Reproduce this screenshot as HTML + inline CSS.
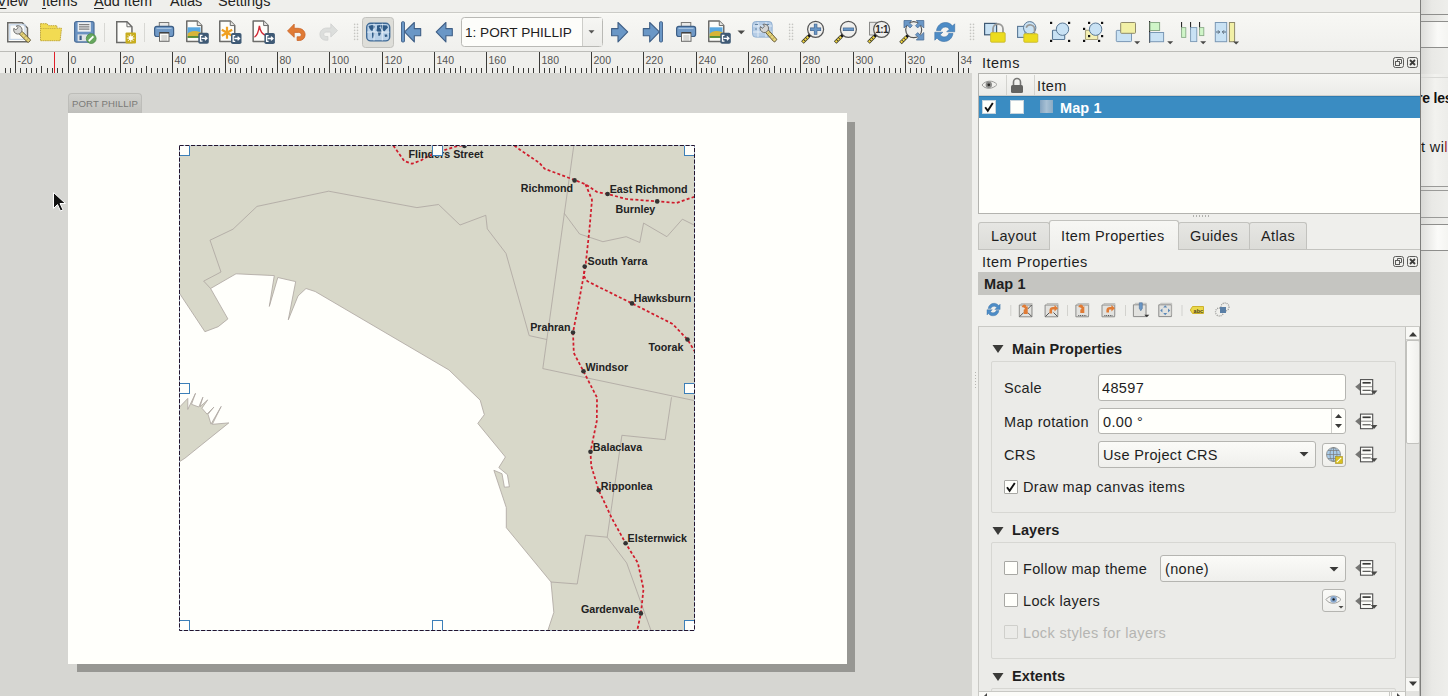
<!DOCTYPE html>
<html><head><meta charset="utf-8">
<style>
*{box-sizing:border-box;margin:0;padding:0}
html,body{width:1448px;height:696px;overflow:hidden;background:#efefec;font-family:"Liberation Sans",sans-serif;font-size:14px;color:#1e1e1e}
.a{position:absolute}
#menubar{left:0;top:0;width:1420px;height:13px;background:#efefec;border-bottom:1px solid #cbcbc7;overflow:hidden}
#menubar span{position:absolute;top:-7px;font-size:14.5px;line-height:16px;color:#232321}
#menubar u{text-decoration:underline;text-decoration-thickness:1px;text-underline-offset:2px}
#toolbar{left:0;top:13px;width:1420px;height:39px;background:linear-gradient(#fbfbf7 0px,#f7f7f4 2px,#f0f0ed 100%);border-bottom:1px solid #bcbcb8}
#ruler{left:0;top:52px;width:972px;height:21px;background:#efefec;overflow:hidden}
.rl text{font-size:10.5px;fill:#555553;font-family:"Liberation Sans",sans-serif}
#canvas{left:0;top:73px;width:972px;height:623px;background:#d6d6d2;overflow:hidden}
#dock{left:972px;top:52px;width:448px;height:644px;background:#efefec}
#farright{overflow:hidden;left:1420px;top:0;width:28px;height:696px;background:linear-gradient(90deg,#d8d8d5,#e9e9e6 40%,#eeeeeb);border-left:1px solid #7e7e7c}
.sep{position:absolute;width:1px;background:#d0d0cc}
.grip{position:absolute;width:5px;height:16px;background-image:radial-gradient(circle,#b9b9b5 0.7px,transparent 0.8px);background-size:2.5px 3px}
.title{position:absolute;font-size:14.5px;color:#1e1e1e;letter-spacing:0.5px}
.dockbtn{position:absolute;width:11px;height:11px;border:1px solid #6a6a68;border-radius:2px}
.lbl{position:absolute;font-size:14.5px;color:#1e1e1e;white-space:nowrap;letter-spacing:0.35px}
.bold{font-weight:bold;letter-spacing:0.1px}
.edit{position:absolute;background:#fffffb;border:1px solid #b5b5b1;border-radius:3px}
.combo{position:absolute;background:linear-gradient(#fbfbf8,#efefec);border:1px solid #b5b5b1;border-radius:3px}
.chk{position:absolute;width:14px;height:14px;background:#fffffb;border:1px solid #a8a8a4;border-radius:1px}
.tab{position:absolute;height:27px;border:1px solid #c2c2be;border-bottom:none;border-radius:3px 3px 0 0;background:linear-gradient(#e6e6e3,#dcdcd8)}
.grp{position:absolute;border:1px solid #d7d7d3;border-radius:2px;background:#ebebe8}
</style></head>
<body>
<div id="menubar" class="a">
  <span style="left:-3px"><u>V</u>iew</span>
  <span style="left:42px"><u>I</u>tems</span>
  <span style="left:94px"><u>A</u>dd Item</span>
  <span style="left:170px">Atlas</span>
  <span style="left:218px">Settings</span>
</div>
<div id="toolbar" class="a"></div>
<svg class="a" style="left:0;top:13px" width="1420" height="38" viewBox="0 13 1420 38">
<defs>
 <g id="badge"><rect x="0" y="0" width="10.5" height="11" rx="1.8" fill="#3f5a75"/>
  <path d="M4.2 2.6H2.2v5.8h2M3.3 5.5h5.2M6.6 3.6l2 1.9-2 1.9" fill="none" stroke="#fff" stroke-width="1.3"/></g>
 <g id="page"><path d="M0.75 0.75h10.5l4.5 4.5v16h-15z" fill="#fdfdfa" stroke="#6c6c6a" stroke-width="1.5" stroke-linejoin="round"/><path d="M11.25 0.75v4.5h4.5" fill="#e6e6e3" stroke="#6c6c6a" stroke-width="1"/></g>
 <g id="arrowL"><path d="M0.8 10.3L10.5 0.9v6.1h6.4v7.2h-6.4v6.1z" fill="#6a97c6" stroke="#3f5f86" stroke-width="1.1" stroke-linejoin="round"/></g>
 <g id="lens"><circle cx="0" cy="0" r="8" fill="#efefed" stroke="#555" stroke-width="1.2"/><path d="M-5.8 5.8l-1.6 1.6" stroke="#111" stroke-width="3"/><path d="M-7.2 7.2l-6 6" stroke="#3a3a2a" stroke-width="3.6"/><path d="M-7.4 7.4l-5.6 5.6" stroke="#f2d640" stroke-width="2.2" stroke-dasharray="2 0.8"/></g>
 <g id="dd"><path d="M0 0h6l-3 3z" fill="#4a4a48"/></g>
 <g id="printer"><rect x="5.3" y="0.5" width="9.5" height="6" fill="#e9e9e7" stroke="#7a7a78" stroke-width="1"/><rect x="0.6" y="4.3" width="19" height="10.2" rx="2.2" fill="#7099c6" stroke="#3e5f86" stroke-width="1.2"/><path d="M2.5 6.5h15" stroke="#a8c4e0" stroke-width="1"/><rect x="5.5" y="10.8" width="9.5" height="8.5" fill="#fbfbf8" stroke="#6a6a68" stroke-width="1"/><path d="M5.5 10.8h9.5" stroke="#333" stroke-width="1.2"/><path d="M7.3 14h6M7.3 16h6M7.3 18h6" stroke="#8a8a88" stroke-width="0.6"/></g>
</defs>
<!-- 1 layout manager -->
<g transform="translate(7,22)"><path d="M0.75 0.75h14.5l5.2 5.2v13.8h-19.7z" fill="#fbfbf8" stroke="#6a6a68" stroke-width="1.5"/><rect x="2.8" y="2.8" width="15.2" height="14.6" fill="none" stroke="#c5d6ea" stroke-width="1.2"/>
 <g transform="translate(10.8,7.8) rotate(-45)"><rect x="-1.9" y="3" width="3.8" height="13.5" rx="1" fill="#e6d47a" stroke="#5e5230" stroke-width="0.9"/><path d="M-1.9 6.5h3.8M-1.9 10h3.8M-1.9 13.5h3.8" stroke="#a89848" stroke-width="0.7"/>
 <path d="M-1.6 -3.8V-1.3H1.6V-3.8A4.2 4.2 0 1 1 -1.6 -3.8z" fill="#d6d6d4" stroke="#6a6a68" stroke-width="0.9"/></g></g>
<!-- 2 open folder -->
<g transform="translate(40,22.5)"><path d="M0.5 1.2h6.5l1.4 2h8.4v2.5h4.7l-1.4 12.5H0.5z" fill="#f2db52" stroke="#c2a93b" stroke-width="1" stroke-dasharray="1.6 0.6"/><path d="M0.8 6h15.6" stroke="#c9b245" stroke-width="0.9" stroke-dasharray="1.6 0.6"/></g>
<!-- 3 save -->
<g transform="translate(74,21)"><rect x="0.6" y="0.6" width="19.4" height="20.6" rx="2" fill="#6b93c2" stroke="#4b6e98" stroke-width="1.2"/><rect x="3.6" y="1.2" width="13.2" height="9.5" fill="#eef0f2"/><path d="M5 3.7h10.4M5 5.9h10.4M5 8.1h10.4" stroke="#555" stroke-width="0.9"/><rect x="3.6" y="13.4" width="10" height="6.8" fill="#dfe3e6"/><rect x="5.5" y="14.6" width="2.2" height="4.4" fill="#3e5f86"/>
 <circle cx="17.2" cy="17.6" r="4.9" fill="#67a85e" stroke="#4f8a47" stroke-width="0.8"/><path d="M14.8 20l4.6-4.6" stroke="#fff" stroke-width="1.8"/></g>
<rect x="104" y="23" width="1" height="19" fill="#d8d8d4"/>
<!-- 5 new layout -->
<g transform="translate(116,21)"><path d="M0.75 0.75h10.2l5 5v15.7h-15.2z" fill="#fdfdfa" stroke="#6c6c6a" stroke-width="1.5"/><path d="M10.95 0.75v5h5" fill="none" stroke="#6c6c6a" stroke-width="1"/>
 <rect x="9.5" y="11.6" width="10.5" height="11" rx="1" fill="#c8ad1e"/><circle cx="14.75" cy="17.1" r="2.2" fill="#fff"/><path d="M14.75 13.2v7.8M10.9 17.1h7.7M12 14.4l5.5 5.5M17.5 14.4L12 19.9" stroke="#fff" stroke-width="0.9"/></g>
<rect x="144" y="23" width="1" height="19" fill="#d8d8d4"/>
<!-- 7 print -->
<use href="#printer" transform="translate(154,22)"/>
<!-- 8 export image -->
<g transform="translate(186,20.3)"><use href="#page"/><rect x="1.6" y="7" width="12.9" height="10.5" fill="#5aa8e0"/><path d="M1.6 13.5c3-3 7-3.5 12.9-1.5v5.5H1.6z" fill="#d8b438"/><rect x="1.6" y="15.8" width="12.9" height="1.7" fill="#4b8a3a"/><use href="#badge" transform="translate(12.3,12.5)"/></g>
<!-- 9 export svg -->
<g transform="translate(219,20.3)"><use href="#page"/><path d="M8 6.5v12M2.8 9.5l10.4 6M2.8 15.5l10.4-6" stroke="#f0a020" stroke-width="2.2"/><use href="#badge" transform="translate(12,12.7)"/></g>
<!-- 10 export pdf -->
<g transform="translate(252.4,20.3)"><use href="#page"/><path d="M2 16.8c2.2-1 4-4.5 5-11.2 0.6 4.8 3 8.4 6.5 9.4" fill="none" stroke="#d22a36" stroke-width="1.4"/><use href="#badge" transform="translate(12,12.7)"/></g>
<!-- 11 undo -->
<g transform="translate(287,23.6)"><path d="M0.5 7.4L7.2 0.5v4.2h3.6c4.5 0 7.3 2.9 7.3 6.4 0 3.4-2.6 5.8-5.7 5.8h-2.3v-3.7h2c1.3 0 2.2-0.9 2.2-2.1s-1-2.3-2.7-2.3H7.2v4.9z" fill="#e07b35" stroke="#c9652a" stroke-width="0.8"/></g>
<!-- 12 redo -->
<g transform="translate(338,23.3) scale(-1,1)"><path d="M0.5 7.4L7.2 0.5v4.2h3.6c4.5 0 7.3 2.9 7.3 6.4 0 3.4-2.6 5.8-5.7 5.8h-2.3v-3.7h2c1.3 0 2.2-0.9 2.2-2.1s-1-2.3-2.7-2.3H7.2v4.9z" fill="#dcdedc" stroke="#cfd1cf" stroke-width="0.8"/></g>
<!-- grip 1 -->
<g fill="#c6c6c2"><circle cx="354.6" cy="24.4" r="0.8"/><circle cx="357.5" cy="24.4" r="0.8"/><circle cx="354.6" cy="27.4" r="0.8"/><circle cx="357.5" cy="27.4" r="0.8"/><circle cx="354.6" cy="30.4" r="0.8"/><circle cx="357.5" cy="30.4" r="0.8"/><circle cx="354.6" cy="33.4" r="0.8"/><circle cx="357.5" cy="33.4" r="0.8"/><circle cx="354.6" cy="36.4" r="0.8"/><circle cx="357.5" cy="36.4" r="0.8"/><circle cx="354.6" cy="39.4" r="0.8"/><circle cx="357.5" cy="39.4" r="0.8"/></g>
<!-- atlas preview (active) -->
<rect x="362.5" y="17.5" width="31" height="30" rx="3" fill="#deded9" stroke="#c2c2be" stroke-width="1"/>
<g transform="translate(366,22.6)"><rect x="0.7" y="0.7" width="23" height="17.6" rx="4" fill="#b9d1e8" stroke="#3f6a96" stroke-width="1.4"/>
 <path d="M2.5 3.5L6 2.5 9 3.5 8.5 5.5 7 6.5 6.5 8.5 5 8 3.5 6zM6 9.5L8.5 10 8 13 7 16 6.2 15 6 12zM11 3L14 2.5 14.5 4.5 13 5 14.5 6 15.5 9 14 13 12.5 13.5 12 10 10.5 8 11 6zM14.5 2.5L21 3 22 5 20 7 18.5 9 17 8 15.5 6zM18.5 12L21 12 21.5 14 19 14.5z" fill="#2e5a86"/>
 <path d="M1 9.5h22.5M8 1v17M16.3 1v17" stroke="#eef4fa" stroke-width="0.8" opacity="0.9"/></g>
<!-- first -->
<g transform="translate(401,21.4)"><rect x="0.5" y="0.3" width="3" height="20.3" rx="1" fill="#6a97c6" stroke="#3f5f86" stroke-width="0.9"/><use href="#arrowL" transform="translate(2.8,0.2)"/></g>
<!-- prev -->
<use href="#arrowL" transform="translate(435.4,21.6)"/>
<!-- combo -->
<rect x="461.5" y="17.5" width="141" height="29" rx="3" fill="#fdfdfa" stroke="#b9b9b5" stroke-width="1"/>
<rect x="582.5" y="18" width="19.5" height="28" fill="url(#cg)"/>
<linearGradient id="cg" x1="0" y1="0" x2="0" y2="1"><stop offset="0" stop-color="#f6f6f3"/><stop offset="1" stop-color="#ecece9"/></linearGradient>
<rect x="582" y="18" width="1" height="28" fill="#cdcdc9"/>
<path d="M588.5 30.2h6l-3 3.3z" fill="#555553"/>
<!-- next -->
<use href="#arrowL" transform="translate(628.5,21.6) scale(-1,1)"/>
<!-- last -->
<g transform="translate(643,21.4)"><use href="#arrowL" transform="translate(17.2,0.2) scale(-1,1)"/><rect x="16.5" y="0.3" width="3" height="20.3" rx="1" fill="#6a97c6" stroke="#3f5f86" stroke-width="0.9"/></g>
<!-- print atlas -->
<use href="#printer" transform="translate(676,22)"/>
<!-- export atlas image -->
<g transform="translate(708,20.3)"><use href="#page"/><rect x="1.6" y="7" width="12.9" height="10.5" fill="#5aa8e0"/><path d="M1.6 13.5c3-3 7-3.5 12.9-1.5v5.5H1.6z" fill="#d8b438"/><rect x="1.6" y="15.8" width="12.9" height="1.7" fill="#4b8a3a"/><use href="#badge" transform="translate(12.3,12.5)"/></g>
<use href="#dd" transform="translate(737.5,30.5) scale(1.25)"/>
<!-- atlas settings -->
<g transform="translate(752,21)"><rect x="0.6" y="0.6" width="19.5" height="15.5" rx="3" fill="#b6cde6" stroke="#8eaed0" stroke-width="1"/><path d="M1 5h19M1 11h19M6 1v15M14 1v15" stroke="#e8f0f8" stroke-width="0.9"/><path d="M3 3.5h3M14 3.5h3M3 8h2M16 13h2" stroke="#5a7a9a" stroke-width="0.9"/>
 <g transform="translate(12.3,7.3) rotate(-42)"><rect x="-1.9" y="3" width="3.8" height="14" rx="1" fill="#e6d47a" stroke="#5e5230" stroke-width="0.9"/><path d="M-1.9 6.5h3.8M-1.9 10h3.8M-1.9 13.5h3.8" stroke="#a89848" stroke-width="0.7"/>
 <path d="M-1.6 -3.8V-1.3H1.6V-3.8A4.2 4.2 0 1 1 -1.6 -3.8z" fill="#d6d6d4" stroke="#6a6a68" stroke-width="0.9"/></g></g>
<!-- grip 2 -->
<g fill="#c6c6c2"><circle cx="789.6" cy="24.4" r="0.8"/><circle cx="792.5" cy="24.4" r="0.8"/><circle cx="789.6" cy="27.4" r="0.8"/><circle cx="792.5" cy="27.4" r="0.8"/><circle cx="789.6" cy="30.4" r="0.8"/><circle cx="792.5" cy="30.4" r="0.8"/><circle cx="789.6" cy="33.4" r="0.8"/><circle cx="792.5" cy="33.4" r="0.8"/><circle cx="789.6" cy="36.4" r="0.8"/><circle cx="792.5" cy="36.4" r="0.8"/><circle cx="789.6" cy="39.4" r="0.8"/><circle cx="792.5" cy="39.4" r="0.8"/></g>
<!-- zoom in -->
<g transform="translate(815.6,29.3)"><use href="#lens"/><path d="M-5.5 0h11M0 -5.5v11" stroke="#3f5f86" stroke-width="3.4"/><path d="M-5 0h10M0 -5v10" stroke="#6a97c6" stroke-width="2.2"/></g>
<!-- zoom out -->
<g transform="translate(848.4,29.3)"><use href="#lens"/><path d="M-5.5 0h11" stroke="#3f5f86" stroke-width="3.4"/><path d="M-5 0h10" stroke="#6a97c6" stroke-width="2.2"/></g>
<!-- zoom 1:1 -->
<rect x="869.5" y="22.3" width="8" height="12.7" fill="#e6e6e4" stroke="#8a8a88" stroke-width="1"/>
<g transform="translate(881.6,29.3)"><use href="#lens"/><text x="0" y="3.8" text-anchor="middle" font-family="Liberation Sans" font-weight="bold" font-size="10" fill="#2a2a2a" letter-spacing="-0.6">1:1</text></g>
<!-- zoom full -->
<g transform="translate(913.7,29.7)"><use href="#lens"/></g>
<g fill="#6a97c6" stroke="#4b6f97" stroke-width="0.8"><path d="M904 20.5h7.5l-2.2 2.2 3 3-2.2 2.2-3-3-3.1 3.1z"/><path d="M923.8 20.5h-7.5l2.2 2.2-3 3 2.2 2.2 3-3 3.1 3.1z"/><path d="M923.8 40h-7.5l2.2-2.2-3-3 2.2-2.2 3 3 3.1-3.1z"/></g>
<!-- refresh -->
<g transform="translate(934.5,21)"><path d="M2 9.5C2.8 4.5 6.5 1.5 11 1.5c3.3 0 5.5 1.5 7 3.5l2.2-2.2v8h-8l2.6-2.6C13.8 6.8 12.5 6 11 6 8.5 6 6.6 7.8 6.3 9.5z" fill="#4d8cc6" stroke="#3a6fa2" stroke-width="0.6"/><path d="M18.5 12.5c-0.8 5-4.5 8-9 8-3.3 0-5.5-1.5-7-3.5L0.3 19.2v-8h8l-2.6 2.6c1 1.4 2.3 2.2 3.8 2.2 2.5 0 4.4-1.8 4.7-3.5z" fill="#4d8cc6" stroke="#3a6fa2" stroke-width="0.6"/></g>
<!-- grip 3 -->
<g fill="#c6c6c2"><circle cx="970.5" cy="24.4" r="0.8"/><circle cx="973.5" cy="24.4" r="0.8"/><circle cx="970.5" cy="27.4" r="0.8"/><circle cx="973.5" cy="27.4" r="0.8"/><circle cx="970.5" cy="30.4" r="0.8"/><circle cx="973.5" cy="30.4" r="0.8"/><circle cx="970.5" cy="33.4" r="0.8"/><circle cx="973.5" cy="33.4" r="0.8"/><circle cx="970.5" cy="36.4" r="0.8"/><circle cx="973.5" cy="36.4" r="0.8"/><circle cx="970.5" cy="39.4" r="0.8"/><circle cx="973.5" cy="39.4" r="0.8"/></g>
<!-- lock -->
<rect x="984.6" y="23.4" width="12" height="11.4" fill="#c9e2f4" stroke="#3f5a75" stroke-width="1.2"/>
<path d="M993 33V29a5 5 0 0 1 10 0v4" fill="none" stroke="#9a9a98" stroke-width="1.8"/>
<rect x="990.6" y="32.6" width="14.6" height="9.6" rx="1" fill="#ecdc1e" stroke="#c5b52a" stroke-width="0.8"/>
<!-- unlock -->
<rect x="1017.6" y="26.4" width="7.5" height="11" fill="#c9e2f4" stroke="#5a7895" stroke-width="1.1"/>
<circle cx="1029.7" cy="27.8" r="6.2" fill="#c9e2f4" stroke="#5a7895" stroke-width="1"/>
<path d="M1034.5 34V29.5a4.3 4.3 0 0 0-8.3-1.8" fill="none" stroke="#9a9a98" stroke-width="1.6"/>
<rect x="1023.8" y="33.8" width="14" height="8.5" rx="1" fill="#ecdc1e" stroke="#c5b52a" stroke-width="0.8"/>
<!-- group -->
<rect x="1052.5" y="30.2" width="12.2" height="9.3" rx="0.8" fill="#c9e2f4" stroke="#5a7895" stroke-width="1.1"/>
<circle cx="1062.5" cy="29.2" r="6.2" fill="#c9e2f4" stroke="#5a7895" stroke-width="1"/>
<g fill="#111"><rect x="1050" y="21.8" width="2.2" height="2.2"/><rect x="1068" y="21.8" width="2.2" height="2.2"/><rect x="1050" y="39.8" width="2.2" height="2.2"/><rect x="1068" y="39.8" width="2.2" height="2.2"/></g>
<!-- ungroup -->
<rect x="1085.5" y="30.2" width="12.2" height="9.3" rx="0.8" fill="#f4f0b4" stroke="#a8a27a" stroke-width="1.1"/>
<circle cx="1095.6" cy="29.2" r="6.2" fill="#c9e2f4" stroke="#5a7895" stroke-width="1"/>
<g fill="#111"><rect x="1088" y="21.8" width="2.2" height="2.2"/><rect x="1101" y="21.8" width="2.2" height="2.2"/><rect x="1083" y="27.8" width="2.2" height="2.2"/><rect x="1088" y="35" width="2.2" height="2.2"/><rect x="1101" y="35" width="2.2" height="2.2"/><rect x="1083" y="39.8" width="2.2" height="2.2"/><rect x="1098" y="39.8" width="2.2" height="2.2"/></g>
<!-- raise -->
<rect x="1116.3" y="30.4" width="15.2" height="11.2" rx="0.8" fill="#c9e2f4" stroke="#7a98b5" stroke-width="1"/>
<rect x="1120.7" y="22.5" width="14.8" height="10.8" rx="0.8" fill="#f2f0a6" stroke="#8f8a6a" stroke-width="1"/>
<use href="#dd" transform="translate(1134.2,41.3)"/>
<!-- align -->
<rect x="1149" y="21" width="1.2" height="21.7" fill="#2a2a2a"/>
<rect x="1150" y="22.5" width="9.6" height="8" fill="#cff5c8" stroke="#8aab88" stroke-width="1"/>
<rect x="1150" y="32.5" width="13.6" height="9.2" fill="#c9e2f4" stroke="#7a98b5" stroke-width="1"/>
<use href="#dd" transform="translate(1167.2,41.3)"/>
<!-- distribute -->
<g fill="#2a2a2a"><rect x="1181" y="22" width="1.1" height="8"/><rect x="1190" y="22" width="1.1" height="8"/><rect x="1199" y="22" width="1.1" height="8"/></g>
<rect x="1181.6" y="27.6" width="4.2" height="9.8" fill="#cff5c8" stroke="#8aab88" stroke-width="0.9"/>
<rect x="1190.6" y="27.6" width="6.2" height="14" fill="#c9e2f4" stroke="#7a98b5" stroke-width="0.9"/>
<rect x="1199.6" y="27.6" width="4.2" height="8" fill="#cff5c8" stroke="#8aab88" stroke-width="0.9"/>
<use href="#dd" transform="translate(1200.2,41.3)"/>
<!-- resize -->
<rect x="1215.3" y="22.5" width="11.4" height="19.2" fill="#c9e2f4" stroke="#7a98b5" stroke-width="1"/>
<path d="M1216 32h3.5M1218 30.3l1.7 1.7-1.7 1.7M1226 32h-3.5M1224 30.3l-1.7 1.7 1.7 1.7" fill="none" stroke="#4a5a6a" stroke-width="0.9"/>
<rect x="1229.4" y="22.5" width="5.2" height="19.2" fill="#f2f0a6" stroke="#8f8a6a" stroke-width="1"/>
<use href="#dd" transform="translate(1233.1,41.6)"/>
</svg>
<div class="lbl" style="left:465px;top:25px;font-size:13.6px;color:#1e1e1e;letter-spacing:0">1: PORT PHILLIP</div>

<div id="ruler" class="a"><svg width="972" height="21" style="position:absolute;left:0;top:0"><g stroke="#3a3a38" stroke-width="1" shape-rendering="crispEdges"><line x1="5.5" y1="16" x2="5.5" y2="21"/><line x1="10.5" y1="16" x2="10.5" y2="21"/><line x1="15.5" y1="0" x2="15.5" y2="21"/><line x1="20.5" y1="16" x2="20.5" y2="21"/><line x1="26.5" y1="16" x2="26.5" y2="21"/><line x1="31.5" y1="16" x2="31.5" y2="21"/><line x1="36.5" y1="16" x2="36.5" y2="21"/><line x1="41.5" y1="14" x2="41.5" y2="21"/><line x1="47.5" y1="16" x2="47.5" y2="21"/><line x1="52.5" y1="16" x2="52.5" y2="21"/><line x1="57.5" y1="16" x2="57.5" y2="21"/><line x1="62.5" y1="16" x2="62.5" y2="21"/><line x1="68.5" y1="0" x2="68.5" y2="21"/><line x1="73.5" y1="16" x2="73.5" y2="21"/><line x1="78.5" y1="16" x2="78.5" y2="21"/><line x1="83.5" y1="16" x2="83.5" y2="21"/><line x1="88.5" y1="16" x2="88.5" y2="21"/><line x1="94.5" y1="14" x2="94.5" y2="21"/><line x1="99.5" y1="16" x2="99.5" y2="21"/><line x1="104.5" y1="16" x2="104.5" y2="21"/><line x1="109.5" y1="16" x2="109.5" y2="21"/><line x1="115.5" y1="16" x2="115.5" y2="21"/><line x1="120.5" y1="0" x2="120.5" y2="21"/><line x1="125.5" y1="16" x2="125.5" y2="21"/><line x1="130.5" y1="16" x2="130.5" y2="21"/><line x1="136.5" y1="16" x2="136.5" y2="21"/><line x1="141.5" y1="16" x2="141.5" y2="21"/><line x1="146.5" y1="14" x2="146.5" y2="21"/><line x1="151.5" y1="16" x2="151.5" y2="21"/><line x1="157.5" y1="16" x2="157.5" y2="21"/><line x1="162.5" y1="16" x2="162.5" y2="21"/><line x1="167.5" y1="16" x2="167.5" y2="21"/><line x1="172.5" y1="0" x2="172.5" y2="21"/><line x1="177.5" y1="16" x2="177.5" y2="21"/><line x1="183.5" y1="16" x2="183.5" y2="21"/><line x1="188.5" y1="16" x2="188.5" y2="21"/><line x1="193.5" y1="16" x2="193.5" y2="21"/><line x1="198.5" y1="14" x2="198.5" y2="21"/><line x1="204.5" y1="16" x2="204.5" y2="21"/><line x1="209.5" y1="16" x2="209.5" y2="21"/><line x1="214.5" y1="16" x2="214.5" y2="21"/><line x1="219.5" y1="16" x2="219.5" y2="21"/><line x1="225.5" y1="0" x2="225.5" y2="21"/><line x1="230.5" y1="16" x2="230.5" y2="21"/><line x1="235.5" y1="16" x2="235.5" y2="21"/><line x1="240.5" y1="16" x2="240.5" y2="21"/><line x1="246.5" y1="16" x2="246.5" y2="21"/><line x1="251.5" y1="14" x2="251.5" y2="21"/><line x1="256.5" y1="16" x2="256.5" y2="21"/><line x1="261.5" y1="16" x2="261.5" y2="21"/><line x1="266.5" y1="16" x2="266.5" y2="21"/><line x1="272.5" y1="16" x2="272.5" y2="21"/><line x1="277.5" y1="0" x2="277.5" y2="21"/><line x1="282.5" y1="16" x2="282.5" y2="21"/><line x1="287.5" y1="16" x2="287.5" y2="21"/><line x1="293.5" y1="16" x2="293.5" y2="21"/><line x1="298.5" y1="16" x2="298.5" y2="21"/><line x1="303.5" y1="14" x2="303.5" y2="21"/><line x1="308.5" y1="16" x2="308.5" y2="21"/><line x1="314.5" y1="16" x2="314.5" y2="21"/><line x1="319.5" y1="16" x2="319.5" y2="21"/><line x1="324.5" y1="16" x2="324.5" y2="21"/><line x1="329.5" y1="0" x2="329.5" y2="21"/><line x1="335.5" y1="16" x2="335.5" y2="21"/><line x1="340.5" y1="16" x2="340.5" y2="21"/><line x1="345.5" y1="16" x2="345.5" y2="21"/><line x1="350.5" y1="16" x2="350.5" y2="21"/><line x1="355.5" y1="14" x2="355.5" y2="21"/><line x1="361.5" y1="16" x2="361.5" y2="21"/><line x1="366.5" y1="16" x2="366.5" y2="21"/><line x1="371.5" y1="16" x2="371.5" y2="21"/><line x1="376.5" y1="16" x2="376.5" y2="21"/><line x1="382.5" y1="0" x2="382.5" y2="21"/><line x1="387.5" y1="16" x2="387.5" y2="21"/><line x1="392.5" y1="16" x2="392.5" y2="21"/><line x1="397.5" y1="16" x2="397.5" y2="21"/><line x1="403.5" y1="16" x2="403.5" y2="21"/><line x1="408.5" y1="14" x2="408.5" y2="21"/><line x1="413.5" y1="16" x2="413.5" y2="21"/><line x1="418.5" y1="16" x2="418.5" y2="21"/><line x1="424.5" y1="16" x2="424.5" y2="21"/><line x1="429.5" y1="16" x2="429.5" y2="21"/><line x1="434.5" y1="0" x2="434.5" y2="21"/><line x1="439.5" y1="16" x2="439.5" y2="21"/><line x1="444.5" y1="16" x2="444.5" y2="21"/><line x1="450.5" y1="16" x2="450.5" y2="21"/><line x1="455.5" y1="16" x2="455.5" y2="21"/><line x1="460.5" y1="14" x2="460.5" y2="21"/><line x1="465.5" y1="16" x2="465.5" y2="21"/><line x1="471.5" y1="16" x2="471.5" y2="21"/><line x1="476.5" y1="16" x2="476.5" y2="21"/><line x1="481.5" y1="16" x2="481.5" y2="21"/><line x1="486.5" y1="0" x2="486.5" y2="21"/><line x1="492.5" y1="16" x2="492.5" y2="21"/><line x1="497.5" y1="16" x2="497.5" y2="21"/><line x1="502.5" y1="16" x2="502.5" y2="21"/><line x1="507.5" y1="16" x2="507.5" y2="21"/><line x1="513.5" y1="14" x2="513.5" y2="21"/><line x1="518.5" y1="16" x2="518.5" y2="21"/><line x1="523.5" y1="16" x2="523.5" y2="21"/><line x1="528.5" y1="16" x2="528.5" y2="21"/><line x1="533.5" y1="16" x2="533.5" y2="21"/><line x1="539.5" y1="0" x2="539.5" y2="21"/><line x1="544.5" y1="16" x2="544.5" y2="21"/><line x1="549.5" y1="16" x2="549.5" y2="21"/><line x1="554.5" y1="16" x2="554.5" y2="21"/><line x1="560.5" y1="16" x2="560.5" y2="21"/><line x1="565.5" y1="14" x2="565.5" y2="21"/><line x1="570.5" y1="16" x2="570.5" y2="21"/><line x1="575.5" y1="16" x2="575.5" y2="21"/><line x1="581.5" y1="16" x2="581.5" y2="21"/><line x1="586.5" y1="16" x2="586.5" y2="21"/><line x1="591.5" y1="0" x2="591.5" y2="21"/><line x1="596.5" y1="16" x2="596.5" y2="21"/><line x1="602.5" y1="16" x2="602.5" y2="21"/><line x1="607.5" y1="16" x2="607.5" y2="21"/><line x1="612.5" y1="16" x2="612.5" y2="21"/><line x1="617.5" y1="14" x2="617.5" y2="21"/><line x1="622.5" y1="16" x2="622.5" y2="21"/><line x1="628.5" y1="16" x2="628.5" y2="21"/><line x1="633.5" y1="16" x2="633.5" y2="21"/><line x1="638.5" y1="16" x2="638.5" y2="21"/><line x1="643.5" y1="0" x2="643.5" y2="21"/><line x1="649.5" y1="16" x2="649.5" y2="21"/><line x1="654.5" y1="16" x2="654.5" y2="21"/><line x1="659.5" y1="16" x2="659.5" y2="21"/><line x1="664.5" y1="16" x2="664.5" y2="21"/><line x1="670.5" y1="14" x2="670.5" y2="21"/><line x1="675.5" y1="16" x2="675.5" y2="21"/><line x1="680.5" y1="16" x2="680.5" y2="21"/><line x1="685.5" y1="16" x2="685.5" y2="21"/><line x1="691.5" y1="16" x2="691.5" y2="21"/><line x1="696.5" y1="0" x2="696.5" y2="21"/><line x1="701.5" y1="16" x2="701.5" y2="21"/><line x1="706.5" y1="16" x2="706.5" y2="21"/><line x1="711.5" y1="16" x2="711.5" y2="21"/><line x1="717.5" y1="16" x2="717.5" y2="21"/><line x1="722.5" y1="14" x2="722.5" y2="21"/><line x1="727.5" y1="16" x2="727.5" y2="21"/><line x1="732.5" y1="16" x2="732.5" y2="21"/><line x1="738.5" y1="16" x2="738.5" y2="21"/><line x1="743.5" y1="16" x2="743.5" y2="21"/><line x1="748.5" y1="0" x2="748.5" y2="21"/><line x1="753.5" y1="16" x2="753.5" y2="21"/><line x1="759.5" y1="16" x2="759.5" y2="21"/><line x1="764.5" y1="16" x2="764.5" y2="21"/><line x1="769.5" y1="16" x2="769.5" y2="21"/><line x1="774.5" y1="14" x2="774.5" y2="21"/><line x1="780.5" y1="16" x2="780.5" y2="21"/><line x1="785.5" y1="16" x2="785.5" y2="21"/><line x1="790.5" y1="16" x2="790.5" y2="21"/><line x1="795.5" y1="16" x2="795.5" y2="21"/><line x1="800.5" y1="0" x2="800.5" y2="21"/><line x1="806.5" y1="16" x2="806.5" y2="21"/><line x1="811.5" y1="16" x2="811.5" y2="21"/><line x1="816.5" y1="16" x2="816.5" y2="21"/><line x1="821.5" y1="16" x2="821.5" y2="21"/><line x1="827.5" y1="14" x2="827.5" y2="21"/><line x1="832.5" y1="16" x2="832.5" y2="21"/><line x1="837.5" y1="16" x2="837.5" y2="21"/><line x1="842.5" y1="16" x2="842.5" y2="21"/><line x1="848.5" y1="16" x2="848.5" y2="21"/><line x1="853.5" y1="0" x2="853.5" y2="21"/><line x1="858.5" y1="16" x2="858.5" y2="21"/><line x1="863.5" y1="16" x2="863.5" y2="21"/><line x1="869.5" y1="16" x2="869.5" y2="21"/><line x1="874.5" y1="16" x2="874.5" y2="21"/><line x1="879.5" y1="14" x2="879.5" y2="21"/><line x1="884.5" y1="16" x2="884.5" y2="21"/><line x1="889.5" y1="16" x2="889.5" y2="21"/><line x1="895.5" y1="16" x2="895.5" y2="21"/><line x1="900.5" y1="16" x2="900.5" y2="21"/><line x1="905.5" y1="0" x2="905.5" y2="21"/><line x1="910.5" y1="16" x2="910.5" y2="21"/><line x1="916.5" y1="16" x2="916.5" y2="21"/><line x1="921.5" y1="16" x2="921.5" y2="21"/><line x1="926.5" y1="16" x2="926.5" y2="21"/><line x1="931.5" y1="14" x2="931.5" y2="21"/><line x1="937.5" y1="16" x2="937.5" y2="21"/><line x1="942.5" y1="16" x2="942.5" y2="21"/><line x1="947.5" y1="16" x2="947.5" y2="21"/><line x1="952.5" y1="16" x2="952.5" y2="21"/><line x1="958.5" y1="0" x2="958.5" y2="21"/><line x1="963.5" y1="16" x2="963.5" y2="21"/><line x1="968.5" y1="16" x2="968.5" y2="21"/></g><g class="rl"><text x="17.5" y="12">-20</text><text x="70.5" y="12">0</text><text x="122.5" y="12">20</text><text x="174.5" y="12">40</text><text x="227.5" y="12">60</text><text x="279.5" y="12">80</text><text x="331.5" y="12">100</text><text x="384.5" y="12">120</text><text x="436.5" y="12">140</text><text x="488.5" y="12">160</text><text x="541.5" y="12">180</text><text x="593.5" y="12">200</text><text x="645.5" y="12">220</text><text x="698.5" y="12">240</text><text x="750.5" y="12">260</text><text x="802.5" y="12">280</text><text x="855.5" y="12">300</text><text x="907.5" y="12">320</text><text x="960.5" y="12">340</text></g><line x1="54.5" y1="0" x2="54.5" y2="21" stroke="#e0202a" stroke-width="1" shape-rendering="crispEdges"/></svg></div>
<div id="canvas" class="a">
  <!-- page shadow -->
  <div class="a" style="left:77px;top:49px;width:778px;height:550px;background:#979793"></div>
  <!-- page -->
  <div class="a" style="left:68px;top:40px;width:779px;height:551px;background:#fffffb"></div>
  <!-- page label -->
  <div class="a" style="left:68px;top:20px;width:74px;height:20px;border:1px solid #bdbdb9;border-bottom:none;border-radius:4px 4px 0 0;background:linear-gradient(#d2d2ce,#bfbfbb);font-size:9.6px;color:#7a7a77;padding:4px 0 0 3px;white-space:nowrap;letter-spacing:0.1px">PORT PHILLIP</div>
  <svg class="a" style="left:0;top:0" width="972" height="623" viewBox="0 73 972 623">
<defs><clipPath id="fc"><rect x="179.5" y="145.5" width="515.0" height="485.0"/></clipPath></defs>
<g clip-path="url(#fc)">
<rect x="179.5" y="145.5" width="515.0" height="485.0" fill="#d8d8c9"/>
<polygon points="179.0,292.6 204.9,331.7 218.2,326.7 227.9,318.9 210.6,288.5 236.0,273.8 274.3,275.6 269.3,306.4 277.8,277.5 295.7,281.6 288.3,319.8 298.0,296.0 306.0,288.5 315.2,291.5 449.0,370.0 480.2,400.2 484.3,414.7 477.8,423.4 505.4,457.0 498.8,467.6 507.4,474.7 509.4,486.8 504.4,487.2 502.0,473.7 493.9,470.3 506.3,507.6 506.3,527.7 551.0,582.0 553.8,612.4 547.7,631.0 179.0,631.0" fill="#fffffb" stroke="#aca59f" stroke-width="0.8"/>
<polygon points="179.0,407.6 187.8,398.4 187.8,409.4 195.5,393.3 191.5,404.3 198.8,407.0 202.9,397.2 200.0,406.7 207.7,399.9 201.9,408.2 207.0,414.1 213.8,407.2 208.0,414.3 211.0,424.1 221.2,406.4 212.3,424.3 228.8,422.9 184.8,458.3 179.0,462.0" fill="#d8d8c9" stroke="#aca59f" stroke-width="0.8"/>
<polyline points="210.6,288.5 203.7,281.1 221.0,272.0 210.0,240.2 233.0,229.2 257.0,206.4 328.7,191.2 416.9,207.6 438.6,204.5 460.0,225.0 485.8,215.3 487.3,228.9 506.0,253.4 529.2,335.6 546.8,339.5" fill="none" stroke="#aca59f" stroke-width="0.8"/>
<polyline points="573.8,145.5 542.8,368.6 694.0,400.5" fill="none" stroke="#aca59f" stroke-width="0.8"/>
<polyline points="564.3,213.4 579.6,234.0 602.9,241.7 626.2,236.7 639.8,242.5 643.6,223.1 666.9,236.7 682.4,219.2 694.0,225.0" fill="none" stroke="#aca59f" stroke-width="0.8"/>
<polyline points="551.0,582.0 577.2,584.0 585.5,535.2 607.2,537.2 621.9,435.3 665.2,439.7 671.5,397.3" fill="none" stroke="#aca59f" stroke-width="0.8"/>
<polyline points="607.2,537.2 626.7,563.0 651.0,630.5" fill="none" stroke="#aca59f" stroke-width="0.8"/>
<polyline points="393.3,145.5 398.8,153.3 404.3,161.0 412.0,163.8 420.9,160.4 428.6,156.0 441.9,151.0 457.3,146.0 464.5,145.5" fill="none" stroke="#d01c2c" stroke-width="1.75" stroke-dasharray="3 2.2" stroke-linejoin="round"/>
<polyline points="514.3,145.5 520.3,150.0 539.1,162.7 544.7,168.8 573.8,179.7 585.5,184.3 597.1,192.0 607.6,194.0 626.2,199.0 657.2,201.4 676.6,202.9 694.5,196.7" fill="none" stroke="#d01c2c" stroke-width="1.75" stroke-dasharray="3 2.2" stroke-linejoin="round"/>
<polyline points="585.5,184.3 592.0,199.8 589.3,230.9 585.5,265.8 583.5,275.5 587.4,281.3 632.0,303.4 672.7,324.0 687.5,339.5 694.5,351.0" fill="none" stroke="#d01c2c" stroke-width="1.75" stroke-dasharray="3 2.2" stroke-linejoin="round"/>
<polyline points="585.5,265.8 577.7,308.4 573.0,332.5 573.8,353.0 583.5,371.3 597.0,397.6 596.8,421.0 590.5,451.7 591.2,465.9 598.7,490.2 611.8,518.2 625.6,543.2 637.9,563.0 643.5,589.1 640.9,613.4 637.2,630.5" fill="none" stroke="#d01c2c" stroke-width="1.75" stroke-dasharray="3 2.2" stroke-linejoin="round"/>
<circle cx="464.5" cy="146" r="2.3" fill="#333"/>
<circle cx="574.6" cy="180.4" r="2.3" fill="#333"/>
<circle cx="607.6" cy="194" r="2.3" fill="#333"/>
<circle cx="657.2" cy="201.4" r="2.3" fill="#333"/>
<circle cx="584.7" cy="266.5" r="2.3" fill="#333"/>
<circle cx="632" cy="303.4" r="2.3" fill="#333"/>
<circle cx="573" cy="332.5" r="2.3" fill="#333"/>
<circle cx="687.5" cy="339.5" r="2.3" fill="#333"/>
<circle cx="583.5" cy="371.3" r="2.3" fill="#333"/>
<circle cx="590.5" cy="451.7" r="2.3" fill="#333"/>
<circle cx="598.7" cy="490.2" r="2.3" fill="#333"/>
<circle cx="625.6" cy="543.2" r="2.3" fill="#333"/>
<circle cx="640.9" cy="613.4" r="2.3" fill="#333"/>
<text x="408.6" y="157.7" font-family="Liberation Sans" font-weight="bold" font-size="10.7" fill="#222">Flinders Street</text>
<text x="520.8" y="192.2" font-family="Liberation Sans" font-weight="bold" font-size="10.7" fill="#222">Richmond</text>
<text x="609.7" y="193.3" font-family="Liberation Sans" font-weight="bold" font-size="10.7" fill="#222">East Richmond</text>
<text x="615.5" y="212.7" font-family="Liberation Sans" font-weight="bold" font-size="10.7" fill="#222">Burnley</text>
<text x="587.6" y="265.1" font-family="Liberation Sans" font-weight="bold" font-size="10.7" fill="#222">South Yarra</text>
<text x="633.7" y="302" font-family="Liberation Sans" font-weight="bold" font-size="10.7" fill="#222">Hawksburn</text>
<text x="530.2" y="331" font-family="Liberation Sans" font-weight="bold" font-size="10.7" fill="#222">Prahran</text>
<text x="648.5" y="351.2" font-family="Liberation Sans" font-weight="bold" font-size="10.7" fill="#222">Toorak</text>
<text x="585.6" y="370.6" font-family="Liberation Sans" font-weight="bold" font-size="10.7" fill="#222">Windsor</text>
<text x="592.8" y="451.2" font-family="Liberation Sans" font-weight="bold" font-size="10.7" fill="#222">Balaclava</text>
<text x="600.7" y="489.7" font-family="Liberation Sans" font-weight="bold" font-size="10.7" fill="#222">Ripponlea</text>
<text x="627.6" y="542.3" font-family="Liberation Sans" font-weight="bold" font-size="10.7" fill="#222">Elsternwick</text>
<text x="580.9" y="612.5" font-family="Liberation Sans" font-weight="bold" font-size="10.7" fill="#222">Gardenvale</text>
</g>
<rect x="179.5" y="145.5" width="10" height="10" fill="#fffffb" stroke="#3c7fb8" stroke-width="1" shape-rendering="crispEdges"/>
<rect x="179.5" y="383.5" width="10" height="10" fill="#fffffb" stroke="#3c7fb8" stroke-width="1" shape-rendering="crispEdges"/>
<rect x="179.5" y="620.5" width="10" height="10" fill="#fffffb" stroke="#3c7fb8" stroke-width="1" shape-rendering="crispEdges"/>
<rect x="432.5" y="145.5" width="10" height="10" fill="#fffffb" stroke="#3c7fb8" stroke-width="1" shape-rendering="crispEdges"/>
<rect x="432.5" y="620.5" width="10" height="10" fill="#fffffb" stroke="#3c7fb8" stroke-width="1" shape-rendering="crispEdges"/>
<rect x="684.5" y="145.5" width="10" height="10" fill="#fffffb" stroke="#3c7fb8" stroke-width="1" shape-rendering="crispEdges"/>
<rect x="684.5" y="383.5" width="10" height="10" fill="#fffffb" stroke="#3c7fb8" stroke-width="1" shape-rendering="crispEdges"/>
<rect x="684.5" y="620.5" width="10" height="10" fill="#fffffb" stroke="#3c7fb8" stroke-width="1" shape-rendering="crispEdges"/>
<rect x="179.5" y="145.5" width="515.0" height="485.0" fill="none" stroke="#c8dcf0" stroke-width="1" shape-rendering="crispEdges"/>
<rect x="179.5" y="145.5" width="515.0" height="485.0" fill="none" stroke="#22142e" stroke-width="1" stroke-dasharray="4.2 1.55"/>
</svg>
</div>
<div id="dock" class="a"></div>
<!-- ===== Items dock ===== -->
<div class="title" style="left:982px;top:55px">Items</div>
<svg class="a" style="left:1392px;top:56px" width="28" height="13" viewBox="0 0 28 13">
 <rect x="1.5" y="1.5" width="10" height="10" rx="2" fill="none" stroke="#5c5c5a"/>
 <rect x="3.5" y="5.5" width="4" height="4" fill="none" stroke="#5c5c5a"/><path d="M5.5 5.5V3.5h4v4h-2" fill="none" stroke="#5c5c5a"/>
 <rect x="15.5" y="1.5" width="10" height="10" rx="2" fill="none" stroke="#5c5c5a"/>
 <path d="M18 4l5 5M23 4l-5 5" stroke="#3c3c3a" stroke-width="1.8"/>
</svg>
<div class="a" style="left:978px;top:73px;width:442px;height:141px;background:#fffffb;border:1px solid #b3b3af;border-right:none"></div>
<div class="a" style="left:979px;top:74px;width:441px;height:22px;background:linear-gradient(#f6f6f3,#ebebe8);border-bottom:1px solid #cfcfcb"></div>
<div class="sep" style="left:1006px;top:75px;height:20px;background:#d3d3cf"></div>
<div class="sep" style="left:1034px;top:75px;height:20px;background:#d3d3cf"></div>
<svg class="a" style="left:981px;top:79px" width="17" height="12" viewBox="0 0 17 12">
 <path d="M1 6C4 1.5 12 0.5 16 5.5 12 10.5 4 10.5 1 6z" fill="none" stroke="#9a9a98" stroke-width="1"/>
 <circle cx="7.8" cy="5.8" r="3.2" fill="#8a8a88"/><circle cx="7.8" cy="5.8" r="1.4" fill="#2a2a28"/>
</svg>
<svg class="a" style="left:1010px;top:77px" width="14" height="17" viewBox="0 0 14 17">
 <path d="M3.5 8V5a3.5 3.5 0 0 1 7 0v3" fill="none" stroke="#777775" stroke-width="1.6"/>
 <rect x="1" y="8" width="12" height="8" rx="1.5" fill="#646462"/>
</svg>
<div class="lbl" style="left:1037px;top:78px">Item</div>
<div class="a" style="left:979px;top:96px;width:441px;height:22px;background:#3a8cc2;border-top:1px solid #2f7bb0"></div>
<div class="a" style="left:982px;top:100px;width:14px;height:14px;background:#fffffb;border:1px solid #c7d5de"></div>
<svg class="a" style="left:982px;top:100px" width="14" height="14" viewBox="0 0 14 14"><path d="M3.2 7.2l2.6 3.6L10.8 3" fill="none" stroke="#111" stroke-width="1.9"/></svg>
<div class="a" style="left:1010px;top:100px;width:14px;height:14px;background:#fffffb;border:1px solid #c7d5de"></div>
<div class="a" style="left:1040px;top:100px;width:13px;height:13px;background:linear-gradient(90deg,#8aa6c0,#b4c6d6,#93aec4);opacity:0.9"></div>
<div class="lbl bold" style="left:1060px;top:100px;color:#fff">Map 1</div>
<!-- splitter grip -->
<div class="a" style="left:1192px;top:215px;width:17px;height:2px;background-image:radial-gradient(circle,#b0b0ac 0.6px,transparent 0.7px);background-size:3px 2px"></div>
<!-- ===== Tabs ===== -->
<div class="a" style="left:978px;top:249px;width:442px;height:1px;background:#c3c3bf"></div>
<div class="tab" style="left:978px;top:222px;width:72px"></div>
<div class="tab" style="left:1049px;top:220px;width:130px;height:30px;background:linear-gradient(#f7f7f4,#efefec);z-index:2"></div>
<div class="tab" style="left:1178px;top:222px;width:72px"></div>
<div class="tab" style="left:1249px;top:222px;width:58px"></div>
<div class="lbl" style="left:991px;top:228px">Layout</div>
<div class="lbl" style="left:1061px;top:228px;z-index:3">Item Properties</div>
<div class="lbl" style="left:1190px;top:228px">Guides</div>
<div class="lbl" style="left:1261px;top:228px">Atlas</div>
<!-- ===== Item properties dock ===== -->
<div class="title" style="left:982px;top:254px">Item Properties</div>
<svg class="a" style="left:1392px;top:255px" width="28" height="13" viewBox="0 0 28 13">
 <rect x="1.5" y="1.5" width="10" height="10" rx="2" fill="none" stroke="#5c5c5a"/>
 <rect x="3.5" y="5.5" width="4" height="4" fill="none" stroke="#5c5c5a"/><path d="M5.5 5.5V3.5h4v4h-2" fill="none" stroke="#5c5c5a"/>
 <rect x="15.5" y="1.5" width="10" height="10" rx="2" fill="none" stroke="#5c5c5a"/>
 <path d="M18 4l5 5M23 4l-5 5" stroke="#3c3c3a" stroke-width="1.8"/>
</svg>
<div class="a" style="left:978px;top:272px;width:442px;height:23px;background:#c5c5c1"></div>
<div class="lbl bold" style="left:984px;top:276px">Map 1</div>
<!-- scroll area -->
<div class="a" style="left:978px;top:326px;width:442px;height:370px;background:#ebebe8;border:1px solid #c9c9c5;border-right:none"></div>
<!-- scrollbar -->
<div class="a" style="left:1405px;top:327px;width:15px;height:369px;background:#e3e3e0;border-left:1px solid #c2c2be;border-right:1px solid #bdbdb9"></div>
<div class="a" style="left:1406px;top:327px;width:13px;height:13px;background:#f8f8f5;border-bottom:1px solid #d0d0cc"></div>
<svg class="a" style="left:1406px;top:328px" width="14" height="12"><path d="M3 8.5h8L7 4z" fill="#3a3a38"/></svg>
<div class="a" style="left:1406px;top:340px;width:14px;height:104px;background:linear-gradient(90deg,#fbfbf8,#f0f0ed);border:1px solid #c2c2be;border-radius:2px"></div>
<div class="a" style="left:1406px;top:677px;width:13px;height:14px;background:#f8f8f5;border-top:1px solid #d0d0cc"></div>
<svg class="a" style="left:1406px;top:678px" width="14" height="12"><path d="M3 3.5h8L7 8z" fill="#3a3a38"/></svg>
<!-- Main properties -->
<svg class="a" style="left:992px;top:344px" width="12" height="10"><path d="M0.5 1h11L6 9z" fill="#3a3a38"/></svg>
<div class="lbl bold" style="left:1012px;top:341px">Main Properties</div>
<div class="grp" style="left:991px;top:361px;width:405px;height:152px"></div>
<div class="lbl" style="left:1004px;top:380px">Scale</div>
<div class="edit" style="left:1098px;top:374px;width:248px;height:27px"></div>
<div class="lbl" style="left:1102px;top:380px">48597</div>
<div class="lbl" style="left:1004px;top:414px">Map rotation</div>
<div class="edit" style="left:1098px;top:408px;width:248px;height:26px"></div>
<div class="a" style="left:1331px;top:409px;width:1px;height:24px;background:#cfcfcb"></div>
<svg class="a" style="left:1332px;top:409px" width="13" height="24"><path d="M3 9h7L6.5 5z M3 15h7l-3.5 4z" fill="#3a3a38"/></svg>
<div class="lbl" style="left:1103px;top:414px">0.00 °</div>
<div class="lbl" style="left:1004px;top:447px">CRS</div>
<div class="combo" style="left:1098px;top:441px;width:218px;height:27px"></div>
<svg class="a" style="left:1298px;top:450px" width="12" height="8"><path d="M1.5 2h9L6 6.5z" fill="#3a3a38"/></svg>
<div class="lbl" style="left:1103px;top:447px">Use Project CRS</div>
<div class="combo" style="left:1322px;top:443px;width:24px;height:24px;border-radius:3px"></div>
<div class="chk" style="left:1004px;top:480px"></div>
<svg class="a" style="left:1004px;top:480px" width="14" height="14"><path d="M3 7.2l2.6 3.6L10.8 3" fill="none" stroke="#111" stroke-width="1.9"/></svg>
<div class="lbl" style="left:1023px;top:479px">Draw map canvas items</div>
<!-- Layers -->
<svg class="a" style="left:992px;top:526px" width="12" height="10"><path d="M0.5 1h11L6 9z" fill="#3a3a38"/></svg>
<div class="lbl bold" style="left:1012px;top:522px">Layers</div>
<div class="grp" style="left:991px;top:542px;width:405px;height:117px"></div>
<div class="chk" style="left:1004px;top:561px"></div>
<div class="lbl" style="left:1023px;top:561px">Follow map theme</div>
<div class="combo" style="left:1160px;top:555px;width:186px;height:27px"></div>
<svg class="a" style="left:1328px;top:565px" width="12" height="8"><path d="M1.5 2h9L6 6.5z" fill="#3a3a38"/></svg>
<div class="lbl" style="left:1165px;top:561px">(none)</div>
<div class="chk" style="left:1004px;top:593px"></div>
<div class="lbl" style="left:1023px;top:593px">Lock layers</div>
<div class="combo" style="left:1322px;top:589px;width:24px;height:23px"></div>
<div class="chk" style="left:1004px;top:625px;background:#ebebe8;border-color:#cfcfcb"></div>
<div class="lbl" style="left:1023px;top:625px;color:#b5b5b2">Lock styles for layers</div>
<!-- Extents -->
<svg class="a" style="left:992px;top:672px" width="12" height="10"><path d="M0.5 1h11L6 9z" fill="#3a3a38"/></svg>
<div class="lbl bold" style="left:1012px;top:668px">Extents</div>
<div class="grp" style="left:991px;top:688px;width:405px;height:20px"></div>
<div class="a" style="left:979px;top:691px;width:426px;height:5px;background:#fbfbf8;border-top:1px solid #c8c8c4"></div>
<div class="a" style="left:1389px;top:692px;width:1px;height:4px;background:#c8c8c4"></div><div class="a" style="left:1391px;top:692px;width:1px;height:4px;background:#c8c8c4"></div>
<svg class="a" style="left:983px;top:692px" width="8" height="4"><path d="M1 4L4 1v3z" fill="#444"/></svg><svg class="a" style="left:1394px;top:692px" width="8" height="4"><path d="M6 4L3 1v3z" fill="#444"/></svg>
<!-- dock left grip -->
<div class="a" style="left:974px;top:371px;width:3px;height:18px;background-image:radial-gradient(circle,#b5b5b1 0.6px,transparent 0.7px);background-size:3px 3px"></div>
<!-- item properties toolbar -->
<svg class="a" style="left:978px;top:296px" width="270" height="28" viewBox="978 296 270 28">
 <defs>
  <g id="mbox"><path d="M0.6 2.5h12.6v11.8H0.6z" fill="#e2e2df" stroke="#8c8c8a" stroke-width="1"/><path d="M2.5 2.5v-1.5h11v12" fill="none" stroke="#b5b5b2" stroke-width="0.8"/></g>
 </defs>
 <g transform="translate(986.8,302.3) scale(0.66)"><path d="M2 9.5C2.8 4.5 6.5 1.5 11 1.5c3.3 0 5.5 1.5 7 3.5l2.2-2.2v8h-8l2.6-2.6C13.8 6.8 12.5 6 11 6 8.5 6 6.6 7.8 6.3 9.5z" fill="#4d8cc6" stroke="#3a6fa2" stroke-width="0.6"/><path d="M18.5 12.5c-0.8 5-4.5 8-9 8-3.3 0-5.5-1.5-7-3.5L0.3 19.2v-8h8l-2.6 2.6c1 1.4 2.3 2.2 3.8 2.2 2.5 0 4.4-1.8 4.7-3.5z" fill="#4d8cc6" stroke="#3a6fa2" stroke-width="0.6"/></g>
 <rect x="1010.3" y="305" width="1" height="11" fill="#d2d2ce"/>
 <g transform="translate(1018.7,302.5)"><use href="#mbox"/><path d="M1 14l4-4M13 14l-4-4M13 2.5l-4 4" stroke="#333" stroke-width="0.8"/><path d="M3 4.5c1-3 4-3.5 5 0l1-1v4H5l1.3-1.3C5.6 5 4.5 4.8 3 4.5z M5 7h4v4.5H5z" fill="#e07b35"/></g>
 <g transform="translate(1044.5,302.5)"><use href="#mbox"/><path d="M1 14l4-4M13 14l-4-4" stroke="#333" stroke-width="0.8"/><path d="M5 11V7.5c0-2 1.5-3 3.5-3H10V2.5l3.5 3.2L10 9V7H8.5C8 7 7.6 7.3 7.6 8v3z" fill="#e07b35"/></g>
 <rect x="1067" y="305" width="1" height="11" fill="#d2d2ce"/>
 <g transform="translate(1075.3,302.5)"><use href="#mbox"/><path d="M3 4.5c1-3 4-3.5 5 0l1-1v4H5l1.3-1.3C5.6 5 4.5 4.8 3 4.5z M5 7h4v3.5H5z" fill="#e07b35"/><path d="M3 13h8" stroke="#555" stroke-width="1" stroke-dasharray="1 0.8"/></g>
 <g transform="translate(1101.4,302.5)"><use href="#mbox"/><path d="M5 10V7.5c0-2 1.5-3 3.5-3H10V2.5l3.5 3.2L10 9V7H8.5C8 7 7.6 7.3 7.6 8v2z" fill="#e07b35"/><path d="M3 13h8" stroke="#555" stroke-width="1" stroke-dasharray="1 0.8"/></g>
 <rect x="1125" y="305" width="1" height="11" fill="#d2d2ce"/>
 <g transform="translate(1132.8,302.3)"><use href="#mbox"/><path d="M6.5 0.5h3v5.5l-1.5 2.5-1.5-2.5z" fill="#6a97c6" stroke="#4b6f97" stroke-width="0.6"/><path d="M11.5 12.5h5l-2.5 2.5z" fill="#333"/></g>
 <g transform="translate(1158.2,302.3)"><use href="#mbox"/><path d="M7 3l2 2.2H5zM7 13l2-2.2H5zM2 8.2l2.2-2v4zM12 8.2l-2.2-2v4z" fill="#5a88b8"/></g>
 <rect x="1181.5" y="305" width="1" height="11" fill="#d2d2ce"/>
 <path d="M1190.3 310l2.2-3.5h11v7h-11z" fill="#ead84a" stroke="#c9ad1e" stroke-width="0.9"/>
 <text x="1193.6" y="312.5" font-family="Liberation Sans" font-size="5.5" font-weight="bold" fill="#4a4020">abc</text>
 <g fill="none" stroke="#9a9a98" stroke-width="1.3" stroke-dasharray="1 1"><circle cx="1219.5" cy="312" r="4"/><circle cx="1225" cy="307" r="4"/></g>
 <rect x="1220" y="307" width="6" height="6" fill="#5a7fa6"/>
</svg>
<!-- data-defined buttons -->
<svg class="a" style="left:1350px;top:370px" width="35" height="250" viewBox="1350 370 35 250">
 <defs><g id="ddb"><path d="M0.2 7.8L5.5 3.4v8.8z" fill="#767674"/><rect x="5.5" y="0.6" width="12.2" height="14.6" fill="#fdfdfa" stroke="#505050" stroke-width="1.1"/><path d="M7.5 3.8h8.2" stroke="#3a3a38" stroke-width="1.7"/><path d="M7.5 11.3h8.2" stroke="#3a3a38" stroke-width="1"/><path d="M5.5 7.7h12" stroke="#6a6a68" stroke-width="0.8"/><path d="M15.8 11.6h6.6l-3.3 3.8z" fill="#4a4a48"/></g></defs>
 <use href="#ddb" x="1355" y="379"/>
 <use href="#ddb" x="1355" y="413.5"/>
 <use href="#ddb" x="1355" y="446.6"/>
 <use href="#ddb" x="1355" y="560"/>
 <use href="#ddb" x="1355" y="593.3"/>
</svg>
<!-- CRS globe -->
<svg class="a" style="left:1322px;top:443px" width="24" height="24" viewBox="0 0 24 24">
 <circle cx="11.5" cy="11.5" r="7" fill="#a9cbe8" stroke="#8a8a88" stroke-width="0.8"/>
 <path d="M4.5 11.5h14M11.5 4.5v14M6 7.5h11M6 15.5h11" stroke="#7a7a78" stroke-width="0.7" fill="none"/>
 <ellipse cx="11.5" cy="11.5" rx="3.5" ry="7" fill="none" stroke="#7a7a78" stroke-width="0.7"/>
 <rect x="13.5" y="13.5" width="7" height="7" fill="#d8c020" stroke="#a89020" stroke-width="0.6"/>
 <path d="M14.8 19.2l4.4-4.4" stroke="#fff" stroke-width="1.1"/>
</svg>
<!-- eye button -->
<svg class="a" style="left:1322px;top:589px" width="24" height="23" viewBox="0 0 24 23">
 <path d="M4 10.5C7 6 15 5.5 19 10.5 15 15.5 7 15.5 4 10.5z" fill="#f5f5f3" stroke="#8a8a88" stroke-width="0.8"/>
 <circle cx="11.6" cy="10.4" r="3.3" fill="#86a6cc"/><circle cx="11.6" cy="10.4" r="1.2" fill="#1a1a1a"/>
 <path d="M16.5 17h5l-2.5 2.5z" fill="#4a4a48"/>
</svg>

<div id="farright" class="a">
 <div class="a" style="left:0;top:14px;width:28px;height:1px;background:#8e8e8c"></div>
 <div class="a" style="left:0;top:15px;width:28px;height:6px;background:linear-gradient(90deg,#dcdcd9,#f2f2ef)"></div>
 <div class="a" style="left:0;top:21px;width:28px;height:1px;background:#8e8e8c"></div>
 <div class="a" style="left:0;top:22px;width:28px;height:25px;background:linear-gradient(90deg,#dededb,#fafaf8 60%,#f4f4f1)"></div>
 <div class="a" style="left:0;top:47px;width:28px;height:1px;background:#8e8e8c"></div>
 <div class="a" style="left:0;top:74px;width:28px;height:112px;background:linear-gradient(90deg,#e0e0dd,#f2f2ef 50%,#ecece9)"></div>
 <div class="a bold" style="left:-4px;top:90px;font-size:14px;color:#111;white-space:nowrap;letter-spacing:-0.2px">re less</div>
 <div class="a" style="left:0px;top:139px;font-size:14.5px;color:#1a1a1a;white-space:nowrap;letter-spacing:0.4px">t wi<span style="color:#9a2a2a">l</span></div>
 <div class="a" style="left:0;top:77px;width:28px;height:1px;background:#d8d8d5"></div>
 <div class="a" style="left:0;top:186px;width:28px;height:1px;background:#9a9a98"></div>
 <div class="a" style="left:0;top:190px;width:28px;height:1px;background:#9a9a98"></div>
 <div class="a" style="left:0;top:217px;width:28px;height:1px;background:#9a9a98"></div>
 <div class="a" style="left:0;top:224px;width:28px;height:1px;background:#8e8e8c"></div>
 <div class="a" style="left:0;top:225px;width:28px;height:25px;background:linear-gradient(90deg,#e0e0dd,#fbfbf9 60%,#f4f4f1)"></div>
 <div class="a" style="left:0;top:250px;width:28px;height:1px;background:#8e8e8c"></div>
</div>
<!-- mouse cursor -->
<svg class="a" style="left:52px;top:191px" width="14" height="22" viewBox="0 0 14 22"><path d="M1.5 1.5v16l4-4 3 6.5 2.5-1.2-3-6.3h5.5z" fill="#111" stroke="#fff" stroke-width="1"/></svg>
</body></html>
